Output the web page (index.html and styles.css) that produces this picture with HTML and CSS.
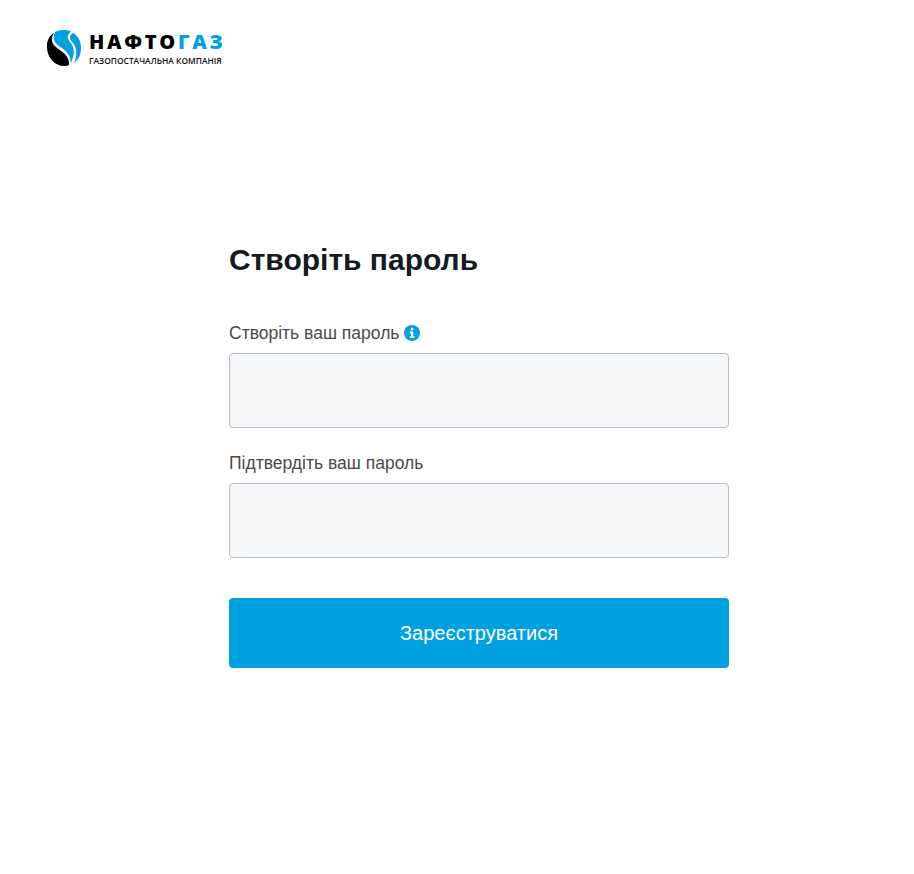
FILE: index.html
```html
<!DOCTYPE html>
<html lang="uk">
<head>
    <meta charset="UTF-8">
    <title>Створіть пароль</title>
    <link rel="stylesheet" href="styles.css">
</head>
<body>
    <header class="logo">
        <svg class="logo-mark" width="36" height="36" viewBox="0 0 36 36">
            <path d="M8 3C2.500 6 0.500 12 1 18C1.500 28 9 36 18 36C20 36 21.500 35.700 23 35C23.500 30 21 25.500 16.500 22C12 18.500 7 16 6 11C5.500 8 6.500 5 8 3Z" fill="#000"/>
            <path d="M9 2C12 0.500 15 0 18 0C20.500 0 23 0.500 25 1.500C23 3 21.500 5 21.800 7.500C22.300 11 25.500 13 27 17C28.500 21.500 28 27 24.500 33.500C25 28 23 24 19 20.500C14.500 16.500 9 14.500 8 9.500C7.500 6.500 8 4 9 2Z" fill="#00a0e1"/>
            <path d="M27 3C32.500 6 35 11.500 35 18C35 24 33 29.500 28 33C30.500 28 31 22.500 29.500 17.500C28 13 24 10.500 24 7.500C24 5.500 25.500 4 27 3Z" fill="#00a0e1"/>
        </svg>
        <div class="logo-text">
            <div class="logo-name">НАФТО<span class="logo-accent">ГАЗ</span></div>
            <div class="logo-sub">ГАЗОПОСТАЧАЛЬНА КОМПАНІЯ</div>
        </div>
    </header>

    <main class="form-wrap">
        <h1>Створіть пароль</h1>
        <form>
            <div class="input-group">
                <label for="password">Створіть ваш пароль
                    <svg class="info-icon" width="16" height="16" viewBox="0 0 16 16">
                        <circle cx="8" cy="8" r="8" fill="#00a0e1"/>
                        <rect x="6.800" y="2.800" width="2.600" height="2.500" rx="0.600" fill="#fff"/>
                        <path d="M5.800 6.600H9.300V11.300H10.400V13H5.800V11.300H6.900V8.300H5.800Z" fill="#fff"/>
                    </svg>
                </label>
                <input type="password" id="password">
            </div>
            <div class="input-group">
                <label for="confirm">Підтвердіть ваш пароль</label>
                <input type="password" id="confirm">
            </div>
            <button type="button">Зареєструватися</button>
        </form>
    </main>
</body>
</html>
```

FILE: styles.css
```css
body {
    margin: 0;
    min-height: 874px;
    background: #fff;
    font-family: "Liberation Sans", Arial, sans-serif;
    color: #4a4a4a;
}
.logo {
    display: flex;
    align-items: center;
    gap: 7px;
    height: 36px;
    padding: 30px 0 0 46px;
}
.logo-mark {
    display: block;
}
.logo-text {
    padding-top: 1px;
}
.logo-name {
    font-family: "Open Sans", sans-serif;
    font-size: 20px;
    font-weight: 800;
    line-height: 20px;
    letter-spacing: 2.7px;
    color: #000;
}
.logo-accent {
    color: #00a0e1;
}
.logo-sub {
    margin-top: 4px;
    font-family: "Open Sans", sans-serif;
    font-size: 8.400px;
    font-weight: 600;
    line-height: 10px;
    color: #111;
}
.form-wrap {
    width: 500px;
    margin: 0 0 0 229px;
    padding-top: 176px;
}
h1 {
    margin: 0 0 45px;
    font-size: 30px;
    line-height: 36px;
    font-weight: 700;
    color: #141a21;
}
.input-group {
    margin-bottom: 25px;
}
label {
    display: flex;
    align-items: center;
    gap: 5px;
    margin-bottom: 10px;
    font-size: 17.500px;
    line-height: 20px;
}
input {
    display: block;
    box-sizing: border-box;
    width: 100%;
    height: 75px;
    margin: 0;
    background: #f6f7f9;
    border: 1px solid #b8bfca;
    border-radius: 4px;
}
button {
    display: block;
    width: 100%;
    height: 70px;
    margin-top: 40px;
    padding: 0;
    background: #00a0e1;
    color: #fff;
    border: none;
    border-radius: 4px;
    font-family: inherit;
    font-size: 20px;
}
```
